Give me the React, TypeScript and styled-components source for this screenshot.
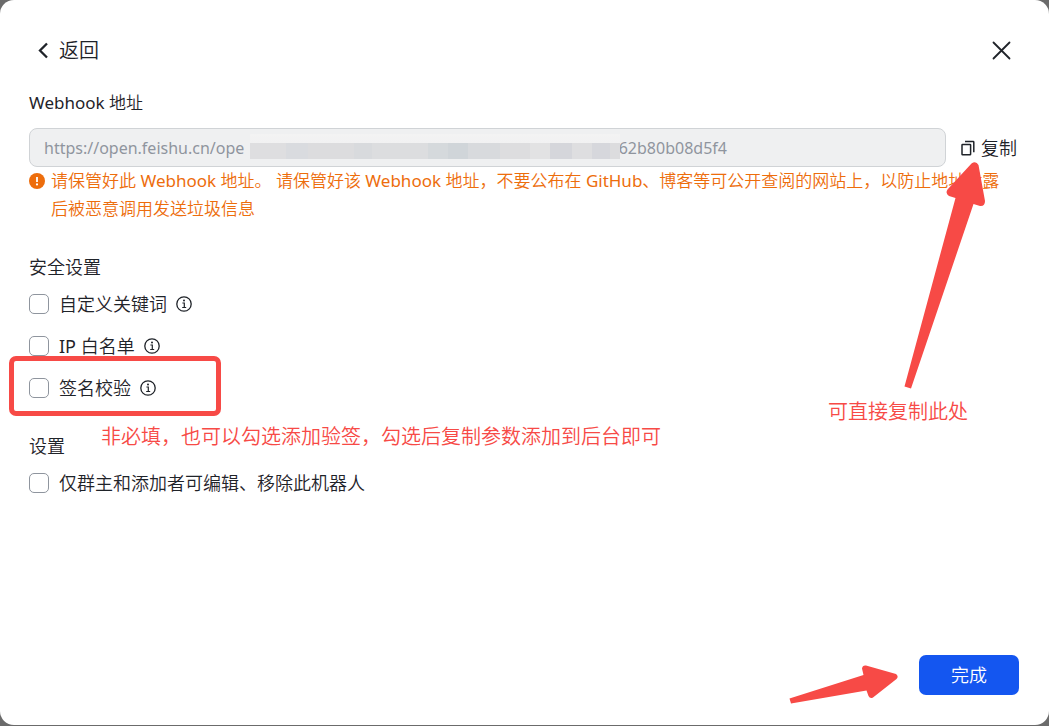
import React from 'react';
import styled, { createGlobalStyle } from 'styled-components';

const GlobalStyle = createGlobalStyle`
  * { box-sizing: border-box; }
  body {
    margin: 0;
    background: #6b6b6b;
    color: #1f2329;
    font-family: "Noto Sans", "Noto Sans CJK SC", sans-serif;
    font-size: 17px;
    font-weight: 350;
    line-height: 28px;
  }
  button, input { font: inherit; color: inherit; }
`;

const RED = '#f74a46';

const Dialog = styled.main`
  display: flex;
  flex-direction: column;
  min-height: calc(100vh - 1px);
  padding: 34px 30px 30px 29px;
  border-radius: 14px;
  background: #fff;
`;

const Header = styled.header`
  display: flex;
  align-items: center;
  justify-content: space-between;
  height: 33px;
  padding: 0 8px;
`;

const PlainButton = styled.button`
  display: flex;
  align-items: center;
  padding: 0;
  border: 0;
  background: none;
  cursor: pointer;
`;

const BackButton = styled(PlainButton)`
  gap: 10px;
  font-size: 20px;
`;

const Section = styled.section<{ $gap: number }>`
  display: flex;
  flex-direction: column;
  margin-top: ${({ $gap }) => $gap}px;
`;

const Title = styled.h2`
  margin: 0 0 9px;
  font-size: 18px;
  font-weight: inherit;
`;

const Latin = styled.span`
  font-weight: 400;
`;

const FieldLabel = styled.label`
  margin-bottom: 11px;
`;

const FieldRow = styled.div`
  position: relative;
  display: flex;
  gap: 15px;
`;

const Field = styled.div`
  position: relative;
  flex: 1;
`;

const UrlInput = styled.input`
  display: block;
  width: 100%;
  height: 39px;
  padding: 0 14px;
  border: 1px solid #d0d3d6;
  border-radius: 8px;
  outline: 0;
  background: #eff0f1;
  color: #8f959e;
  font-size: 16px;
  font-weight: 400;
`;

const Mosaic = styled.div`
  position: absolute;
  top: 6px;
  left: 221px;
  width: 370px;
  height: 25px;
  background:
    linear-gradient(#f3f3f3, #f1f1f2) top / 100% 9px no-repeat,
    linear-gradient(
      90deg,
      #dedee0 0 36px, #d9dbdf 36px 58px, #dcdcde 58px 104px, #d8dadd 104px 122px,
      #dcdddf 122px 178px, #d5d9dc 178px 198px, #d0d5d9 198px 218px,
      #d8dadd 218px 250px, #dddddf 250px 280px, #e2e2e3 280px 300px,
      #d5d6db 300px 322px, #dedee0 322px 342px, #d6d7dc 342px 360px, #dcdcde 360px
    );
`;

const CopyButton = styled(PlainButton)`
  gap: 4px;
  width: 58px;
  font-size: 18px;
  white-space: nowrap;
`;

const Warning = styled.p`
  display: flex;
  gap: 6px;
  margin: 0;
  color: #ed6d0c;

  svg { flex: none; margin-top: 6px; }
`;

const Options = styled.div`
  display: flex;
  flex-direction: column;
  gap: 14px;
  font-size: 18px;
`;

const OptionRow = styled.div`
  position: relative;
  display: flex;
  align-items: center;
  gap: 9px;
`;

const OptionLabel = styled.label`
  display: flex;
  align-items: center;
  gap: 10px;
`;

const Checkbox = styled.input.attrs({ type: 'checkbox' })`
  appearance: none;
  width: 20px;
  height: 20px;
  margin: 0;
  border: 1px solid #8f959e;
  border-radius: 5px;
  background: #fff;

  &:checked { background: #1456f0; }
`;

const Footer = styled.footer`
  display: flex;
  align-items: center;
  justify-content: flex-end;
  gap: 19px;
  height: 40px;
  margin-top: auto;
`;

const DoneButton = styled.button`
  width: 100px;
  height: 40px;
  padding: 0;
  border: 0;
  border-radius: 7px;
  background: #1456f0;
  color: #fff;
  font-size: 18px;
  cursor: pointer;
`;

const Highlight = styled.div`
  position: absolute;
  top: -18px;
  left: -20px;
  width: 212px;
  height: 60px;
  border: 5px solid ${RED};
  border-radius: 7px;
  pointer-events: none;
`;

const Note = styled.span`
  position: absolute;
  color: ${RED};
  font-size: 20px;
  white-space: nowrap;
  pointer-events: none;
`;

const CopyNote = styled(Note)`
  top: 270px;
  right: 51px;
`;

const SignNote = styled(Note)`
  top: 49px;
  left: 72px;
`;

const CopyArrow = styled.svg`
  position: absolute;
  top: 32px;
  right: 33px;
  pointer-events: none;
`;

const InfoButton = () => (
  <PlainButton type="button" aria-label="说明">
    <svg width="16" height="16" viewBox="0 0 16 16" fill="none" stroke="#1f2329">
      <circle cx="8" cy="8" r="7.2" strokeWidth="1.3" />
      <path d="M6.4 7h1.9v4.4M6.2 11.5h4" strokeWidth="1.2" />
      <circle cx="8" cy="4.6" r="1" fill="#1f2329" stroke="none" />
    </svg>
  </PlainButton>
);

type OptionProps = { label: React.ReactNode; info?: boolean; children?: React.ReactNode };

const Option = ({ label, info, children }: OptionProps) => (
  <OptionRow>
    <OptionLabel>
      <Checkbox />
      <span>{label}</span>
    </OptionLabel>
    {info && <InfoButton />}
    {children}
  </OptionRow>
);

const webhookUrl = `https://open.feishu.cn/ope${' '.repeat(90)}62b80b08d5f4`;

export default function App() {
  return (
    <>
      <GlobalStyle />
      <Dialog>
        <Header>
          <BackButton type="button">
            <svg width="12" height="18" viewBox="0 0 12 18" fill="none" stroke="#1f2329" strokeWidth="2.3">
              <path d="M10 1.500 3 8.500l7 7" />
            </svg>
            返回
          </BackButton>
          <PlainButton type="button" aria-label="关闭">
            <svg width="20" height="20" viewBox="0 0 20 20" fill="none" stroke="#1f2329" strokeWidth="1.8" strokeLinecap="round">
              <path d="m2.500 1.500 16 16M18.500 1.500l-16 16" />
            </svg>
          </PlainButton>
        </Header>

        <Section $gap={22}>
          <FieldLabel htmlFor="webhook"><Latin>Webhook</Latin> 地址</FieldLabel>
          <FieldRow>
            <Field>
              <UrlInput id="webhook" readOnly value={webhookUrl} />
              <Mosaic />
            </Field>
            <CopyButton type="button">
              <svg width="16" height="16" viewBox="0 0 16 16" fill="none" stroke="#1f2329" strokeWidth="1.5">
                <rect x="1" y="4.4" width="8.6" height="10.4" rx="0.6" />
                <path d="M4 1.6h8.2a.6.6 0 0 1 .6.6v10" />
              </svg>
              复制
            </CopyButton>
            <CopyArrow width="84" height="230" viewBox="902 160 84 230" fill={RED}>
              <path d="M904.5 386.5 955.5 198 949 196Q945 193.5 947.5 189.5L971.5 163.5Q976 160.5 978.5 165L985 201Q985 206.5 980 206L973.5 204 911 388.5Z" />
            </CopyArrow>
            <CopyNote>可直接复制此处</CopyNote>
          </FieldRow>
          <Warning>
            <svg width="16" height="16" viewBox="0 0 16 16">
              <circle cx="8" cy="8" r="8" fill="#ed6d0c" />
              <path d="M8 4v5" stroke="#fff" strokeWidth="1.8" />
              <circle cx="8" cy="11.4" r="1.1" fill="#fff" />
            </svg>
            <span>
              请保管好此 <Latin>Webhook</Latin> 地址。 请保管好该 <Latin>Webhook</Latin> 地址，不要公布在 <Latin>GitHub</Latin>、博客等可公开查阅的网站上，以防止地址泄露
              <br />
              后被恶意调用发送垃圾信息
            </span>
          </Warning>
        </Section>

        <Section $gap={30}>
          <Title>安全设置</Title>
          <Options>
            <Option label="自定义关键词" info />
            <Option label={<><Latin>IP</Latin> 白名单</>} info />
            <Option label="签名校验" info>
              <Highlight />
              <SignNote>非必填，也可以勾选添加验签，勾选后复制参数添加到后台即可</SignNote>
            </Option>
          </Options>
        </Section>

        <Section $gap={30}>
          <Title>设置</Title>
          <Options>
            <Option label="仅群主和添加者可编辑、移除此机器人" />
          </Options>
        </Section>

        <Footer>
          <svg width="112" height="60" viewBox="788 645 112 60" fill={RED}>
            <path d="M789.5 698.5 863.5 675 862 668.5Q862.5 665 866 665.5L896 674Q899 676.5 896.5 679L873 697.5Q870 699 868.5 696L866.5 690.5 791 703.5Z" />
          </svg>
          <DoneButton type="button">完成</DoneButton>
        </Footer>
      </Dialog>
    </>
  );
}
